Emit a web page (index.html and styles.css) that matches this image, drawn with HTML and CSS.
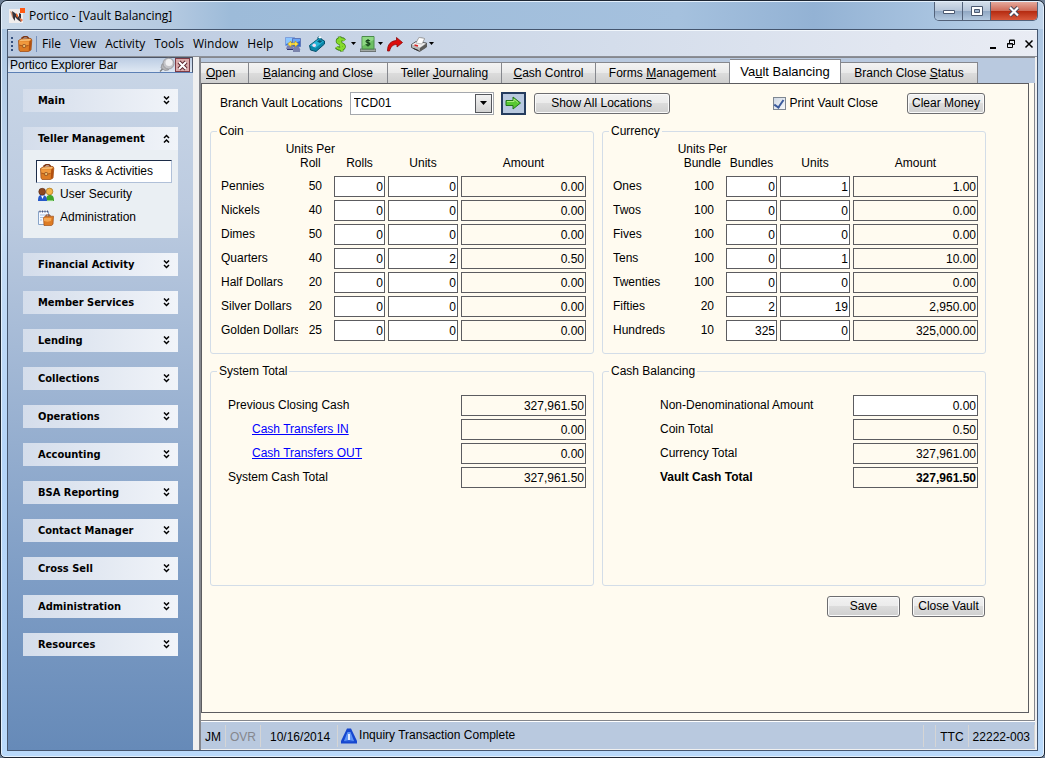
FILE: index.html
```html
<!DOCTYPE html>
<html lang="en">
<head>
    <meta charset="UTF-8">
    <meta name="viewport" content="width=device-width, initial-scale=1.0">
    <title>Portico - [Vault Balancing]</title>
    <link rel="stylesheet" href="styles.css">
</head>
<body>
    <!-- Shared icon shapes -->
    <svg class="icon-defs" aria-hidden="true">
        <symbol id="icon-case" viewBox="0 0 16 16">
            <path d="M5 4V2L7 .8h3L11.500 2v2" fill="none" stroke="#7c3512" stroke-width="1.500"/>
            <path d="M1.500 4.500L4 3l10-.5.8 1.500-.8 10-2.500 1.500H3l-1-1.500z" fill="#dd7c24" stroke="#a1501a" stroke-width=".8"/>
            <path d="M2 5l2.200-1.500 9.800-.5-1.500 1.800z" fill="#f9c27a"/>
            <path d="M2 5.200l10 .3-.5 4-4.500.8-4.500-1.300z" fill="#f0993e"/>
            <path d="M2.300 9l4.700 1.300 4.500-.8" fill="none" stroke="#9a4a14" stroke-width=".8"/>
            <path d="M6 8.500h2.200v3H6z" fill="#ffe08a" stroke="#7c3512" stroke-width=".6"/>
            <path d="M12.300 5.500L14.500 4l-.8 9.800-2 1.500z" fill="#b3500f"/>
        </symbol>
        <symbol id="chevrons-down" viewBox="0 0 7 9">
            <path d="M1 .5l2.500 2.500L6 .5M1 5l2.500 2.500L6 5" fill="none" stroke="#000" stroke-width="1.500"/>
        </symbol>
        <symbol id="chevrons-up" viewBox="0 0 7 9">
            <path d="M1 4l2.500-2.500L6 4M1 8.500L3.500 6 6 8.500" fill="none" stroke="#000" stroke-width="1.500"/>
        </symbol>
    </svg>

    <div class="window">
        <!-- Title bar -->
        <header class="title-bar">
            <svg class="app-icon" viewBox="0 0 16 16" aria-hidden="true">
                <path d="M0 1h14v14H0z" fill="#f1eeee"/>
                <path d="M1 3l4 2v7l-2-3z" fill="#d99a7c"/>
                <path d="M3 3l3 2 4 4V5l2 1v8l-3-2-3-3v4L4 10z" fill="#33333d"/>
                <path d="M7 5l2 2v3L7 8z" fill="#e8662a"/>
                <path d="M11 0h5v5h-5z" fill="#ff5a14"/>
                <path d="M10 9l4 3-2 2z" fill="#e8764a"/>
            </svg>
            <h1 class="title-text">Portico - [Vault Balancing]</h1>
            <div class="window-controls">
                <button class="win-btn" aria-label="Minimize">
                    <svg width="14" height="8" viewBox="0 0 14 8"><path d="M1.500 3.500h11v3h-11z" fill="#fff" stroke="#4b5870"/></svg>
                </button>
                <button class="win-btn" aria-label="Maximize">
                    <svg width="12" height="10" viewBox="0 0 12 10"><path d="M.5.5h11v9H.5z" fill="#fff" stroke="#4b5870"/><path d="M3.500 3.500h5v3h-5z" fill="#9fb4cf" stroke="#4b5870"/></svg>
                </button>
                <button class="win-btn win-close" aria-label="Close">
                    <svg width="12" height="11" viewBox="0 0 12 11"><path d="M2 1.500l8 8M10 1.500l-8 8" stroke="#454a5c" stroke-width="4"/><path d="M2 1.500l8 8M10 1.500l-8 8" stroke="#fff" stroke-width="2.200"/></svg>
                </button>
            </div>
        </header>

        <div class="client">
            <!-- Menu and toolbar -->
            <nav class="menu-bar">
                <span class="grip"></span>
                <svg class="icon" aria-hidden="true"><use href="#icon-case"/></svg>
                <span class="menu-line"></span>
                <div class="menus">
                    <button class="menu-item">File</button>
                    <button class="menu-item">View</button>
                    <button class="menu-item">Activity</button>
                    <button class="menu-item">Tools</button>
                    <button class="menu-item">Window</button>
                    <button class="menu-item">Help</button>
                </div>
                <div class="tools">
                    <button class="tool-btn" aria-label="Connections">
                        <svg class="icon" viewBox="0 0 16 16">
                            <path d="M.5 1.500h9v8h-9z" fill="#3577e8" stroke="#7fa0dc"/>
                            <path d="M1 2h8v3L1 8z" fill="#8cc6ff"/>
                            <path d="M7.500 2.500h8v8h-8z" fill="#2d65d6" stroke="#6079ba"/>
                            <path d="M8 3h7v2L8 8z" fill="#6ba6f8"/>
                            <path d="M2 10h6l1 3H1zM9 11h5l1.500 3H8z" fill="#7a7fb0"/>
                            <path d="M2 13.500h6M8 15h7" stroke="#2f3472"/>
                            <path d="M2.500 8L6 5v2h4V5l3.500 3-3.500 3V9H6v2z" fill="#ffe14a" stroke="#b08a10" stroke-width=".5"/>
                        </svg>
                    </button>
                    <button class="tool-btn" aria-label="Phone">
                        <svg class="icon" viewBox="0 0 16 16">
                            <path d="M.5 9.500L9 3V1l3 .5V3l3.500 2v3L7 15.500 1.500 14z" fill="#0b86a8" stroke="#06506c"/>
                            <path d="M1 9.500L9 3.500l5.800 1.700L6.500 12z" fill="#27b5d6"/>
                            <path d="M8 5.500l2-1.600 3.500 1L11 7z" fill="#0a5372"/>
                            <circle cx="5.200" cy="9.300" r="1.800" fill="#f4d8f0"/>
                            <path d="M9 1.500L11 0l2 1.500-2 1z" fill="#fff"/>
                        </svg>
                    </button>
                    <button class="tool-btn has-arrow" aria-label="Cash">
                        <svg class="icon" viewBox="0 0 16 16">
                            <path d="M11.500 4.500C10 2.500 5 2 4.500 5c-.3 3.300 7 2.200 6.500 5.800-.5 3-6 2.700-7.500.2M6.500.5l2.500 15" fill="none" stroke="#3d7d18" stroke-width="3.600"/>
                            <path d="M11.500 4.500C10 2.500 5 2.500 4.500 5c-.3 3.300 7 2.200 6.500 5.800-.5 2.700-6 2.500-7.500.2M6.500 1L9 15" fill="none" stroke="#86dc2c" stroke-width="2.200"/>
                        </svg>
                        <svg class="drop" viewBox="0 0 5 3"><path d="M0 0h5L2.500 3z"/></svg>
                    </button>
                    <button class="tool-btn has-arrow" aria-label="Cash machine">
                        <svg class="icon" viewBox="0 0 16 16">
                            <path d="M0 13h16v2.500H0z" fill="#a2a9a6" stroke="#4d5552" stroke-width=".7"/>
                            <path d="M2 .5h12V13H2z" fill="#6cbf62" stroke="#4a8a4a"/>
                            <path d="M2.500 1h11v3l-11 6z" fill="#8fd884"/>
                            <path d="M10 5C9 3.800 6 4 6 5.400c0 1.600 4 .9 4 2.600 0 1.500-3.200 1.600-4.200.4M8 3v7.500" fill="none" stroke="#123f19" stroke-width="1.100"/>
                        </svg>
                        <svg class="drop" viewBox="0 0 5 3"><path d="M0 0h5L2.500 3z"/></svg>
                    </button>
                    <button class="tool-btn" aria-label="Forward">
                        <svg class="icon" viewBox="0 0 16 16">
                            <path d="M.5 15C.5 8 4 5 9.500 4.500V1.500L15.500 6.500l-5.500 4.500V8.500C6 8.500 4 10 2.500 15z" fill="#dd0c0c" stroke="#8d0808" stroke-width=".8"/>
                        </svg>
                    </button>
                    <button class="tool-btn has-arrow" aria-label="Print">
                        <svg class="icon" viewBox="0 0 16 16">
                            <path d="M5 7l3-5.500 5.500 1L11 8z" fill="#fff" stroke="#777" stroke-width=".8"/>
                            <path d="M.5 8.500L5 5.500 15.500 7v4l-7 4.500-8-4z" fill="#b9b9b9" stroke="#444" stroke-width=".8"/>
                            <path d="M1 8.500l4.500-2.500 9 1.500L9 11.500z" fill="#efefef"/>
                            <path d="M9 12l6.500-4.500V11l-7 4.500z" fill="#5c5c5a"/>
                            <path d="M5 7l3-5.500 5.500 1L11 8z" fill="#fff" stroke="#999" stroke-width=".6"/>
                            <path d="M3.500 9l3.500 1" stroke="#d22" stroke-width="1.500"/>
                            <path d="M2.500 12.500l5 2" stroke="#222"/>
                        </svg>
                        <svg class="drop" viewBox="0 0 5 3"><path d="M0 0h5L2.500 3z"/></svg>
                    </button>
                </div>
                <div class="child-controls">
                    <button class="child-btn" aria-label="Minimize child"><svg width="10" height="10" viewBox="0 0 10 10"><path d="M2 8h6v2H2z"/></svg></button>
                    <button class="child-btn" aria-label="Restore child"><svg width="10" height="10" viewBox="0 0 10 10"><path d="M3.500 4V1h5v4.500H6.500M3 1.500h6M1.500 4.500h5v4h-5zM1 5h6" fill="none" stroke="#000"/></svg></button>
                    <button class="child-btn" aria-label="Close child"><svg width="10" height="10" viewBox="0 0 10 10"><path d="M1.500 1.500l7 7M8.500 1.500l-7 7" stroke="#000" stroke-width="1.500"/></svg></button>
                </div>
            </nav>

            <div class="main">
                <!-- Explorer bar -->
                <aside class="sidebar">
                    <div class="sidebar-header">
                        <span>Portico Explorer Bar</span>
                        <button class="pin-btn" aria-label="Pin">
                            <svg class="icon" viewBox="0 0 16 16">
                                <path d="M1 14.500l4-4" stroke="#777" stroke-width="1.300"/>
                                <path d="M3 7c3-1 6 1 6.500 6L6 13.500 2 11z" fill="#b5b5b8" stroke="#8a8a8e" stroke-width=".7"/>
                                <circle cx="9.500" cy="6.500" r="5.500" fill="#c4c4c8" stroke="#8a8a8e" stroke-width=".7"/>
                                <circle cx="10" cy="5.500" r="3.500" fill="#f0f0f2"/>
                            </svg>
                        </button>
                        <button class="close-bar" aria-label="Close explorer bar">
                            <svg width="11" height="11" viewBox="0 0 11 11"><path d="M2 2l7 7M9 2L2 9" stroke="#5b2630" stroke-width="4"/><path d="M2 2l7 7M9 2L2 9" stroke="#fff" stroke-width="2"/></svg>
                        </button>
                    </div>
                    <div class="groups">
                        <button class="group-head">Main<svg class="chev"><use href="#chevrons-down"/></svg></button>
                        <section class="group-open">
                            <button class="group-head">Teller Management<svg class="chev"><use href="#chevrons-up"/></svg></button>
                            <div class="group-body">
                                <a class="nav-link active" href="#tasks"><svg class="icon"><use href="#icon-case"/></svg>Tasks &amp; Activities</a>
                                <a class="nav-link" href="#security">
                                    <svg class="icon" viewBox="0 0 16 16">
                                        <path d="M8 14c0-4 1-6 4-6s4 2 4 6z" fill="#3fa52b"/>
                                        <circle cx="11.500" cy="4.500" r="3.400" fill="#f3b548" stroke="#9a6412" stroke-width=".6"/>
                                        <path d="M0 14c0-4.500 1-6 4-6s5 1.500 5 6z" fill="#2458c9"/>
                                        <path d="M3 8.500h3L4.500 12z" fill="#fff"/>
                                        <circle cx="4.200" cy="4.700" r="3.400" fill="#8d4720" stroke="#4c2410" stroke-width=".6"/>
                                        <path d="M9 14h6" stroke="#d8f5d0"/>
                                    </svg>User Security</a>
                                <a class="nav-link" href="#administration">
                                    <svg class="icon" viewBox="0 0 16 16">
                                        <path d="M.5 1.500h10v13H.5z" fill="#f4f8ff" stroke="#88a4c8"/>
                                        <path d="M2 .5v2M4.500.5v2M7 .5v2M9.500.5v2" stroke="#557"/>
                                        <path d="M2 5h6M2 7.500h3M2 10h2" stroke="#a9c1e2"/>
                                        <path d="M8 6.500V5h4v1.500" fill="none" stroke="#7c3512"/>
                                        <path d="M5.500 7.500L7 6.500l8.500-.3-.5 8-1.500 1.300H6z" fill="#dd7c24" stroke="#a1501a" stroke-width=".7"/>
                                        <path d="M6 8h7.500L13 11l-3.500.8L6 11z" fill="#f4a552"/>
                                    </svg>Administration</a>
                            </div>
                        </section>
                        <button class="group-head">Financial Activity<svg class="chev"><use href="#chevrons-down"/></svg></button>
                        <button class="group-head">Member Services<svg class="chev"><use href="#chevrons-down"/></svg></button>
                        <button class="group-head">Lending<svg class="chev"><use href="#chevrons-down"/></svg></button>
                        <button class="group-head">Collections<svg class="chev"><use href="#chevrons-down"/></svg></button>
                        <button class="group-head">Operations<svg class="chev"><use href="#chevrons-down"/></svg></button>
                        <button class="group-head">Accounting<svg class="chev"><use href="#chevrons-down"/></svg></button>
                        <button class="group-head">BSA Reporting<svg class="chev"><use href="#chevrons-down"/></svg></button>
                        <button class="group-head">Contact Manager<svg class="chev"><use href="#chevrons-down"/></svg></button>
                        <button class="group-head">Cross Sell<svg class="chev"><use href="#chevrons-down"/></svg></button>
                        <button class="group-head">Administration<svg class="chev"><use href="#chevrons-down"/></svg></button>
                        <button class="group-head">Resources<svg class="chev"><use href="#chevrons-down"/></svg></button>
                    </div>
                </aside>

                <div class="workspace">
                    <!-- Tabs -->
                    <div class="tabs">
                        <button class="tab tab-open"><span><u>O</u>pen</span></button>
                        <button class="tab tab-balancing"><span><u>B</u>alancing and Close</span></button>
                        <button class="tab tab-journal"><span>Teller <u>J</u>ournaling</span></button>
                        <button class="tab tab-cash"><span><u>C</u>ash Control</span></button>
                        <button class="tab tab-forms"><span>Forms <u>M</u>anagement</span></button>
                        <button class="tab tab-vault selected"><span>Va<u>u</u>lt Balancing</span></button>
                        <button class="tab tab-branch"><span>Branch Close <u>S</u>tatus</span></button>
                    </div>

                    <div class="panel">
                        <main class="page">
                            <div class="top-row">
                                <label for="location">Branch Vault Locations</label>
                                <div class="select-box">
                                    <select id="location"><option>TCD01</option></select>
                                    <span class="select-arrow"><svg class="select-tri" viewBox="0 0 7 4"><path d="M0 0h7L3.500 4z"/></svg></span>
                                </div>
                                <button class="go-btn" aria-label="Go">
                                    <svg width="17" height="16" viewBox="0 0 17 16"><path d="M1 5.500h7V2l7.500 6L8 14v-3.500H1z" fill="#58c832" stroke="#22761a"/><path d="M2 6.500h7V4l4 3.500" fill="none" stroke="#a8ec7c"/></svg>
                                </button>
                                <button class="btn btn-wide">Show All Locations</button>
                                <label class="check"><input type="checkbox" checked>Print Vault Close</label>
                                <button class="btn btn-clear">Clear Money</button>
                            </div>

                            <div class="cards">
                                <fieldset class="card card-count">
                                    <legend>Coin</legend>
                                    <div class="count-body">
                                        <table class="count-table">
                                            <colgroup><col><col class="col-per"><col class="col-packs"><col class="col-units"><col class="col-amount"></colgroup>
                                            <thead>
                                                <tr><th colspan="2" class="per-head"><span>Units Per<br>Roll</span></th><th>Rolls</th><th>Units</th><th>Amount</th></tr>
                                            </thead>
                                            <tbody>
                                                <tr><td class="name">Pennies</td><td class="per">50</td><td><input aria-label="Pennies rolls" value="0"></td><td><input aria-label="Pennies units" value="0"></td><td><input aria-label="Pennies amount" value="0.00" readonly></td></tr>
                                                <tr><td class="name">Nickels</td><td class="per">40</td><td><input aria-label="Nickels rolls" value="0"></td><td><input aria-label="Nickels units" value="0"></td><td><input aria-label="Nickels amount" value="0.00" readonly></td></tr>
                                                <tr><td class="name">Dimes</td><td class="per">50</td><td><input aria-label="Dimes rolls" value="0"></td><td><input aria-label="Dimes units" value="0"></td><td><input aria-label="Dimes amount" value="0.00" readonly></td></tr>
                                                <tr><td class="name">Quarters</td><td class="per">40</td><td><input aria-label="Quarters rolls" value="0"></td><td><input aria-label="Quarters units" value="2"></td><td><input aria-label="Quarters amount" value="0.50" readonly></td></tr>
                                                <tr><td class="name">Half Dollars</td><td class="per">20</td><td><input aria-label="Half Dollars rolls" value="0"></td><td><input aria-label="Half Dollars units" value="0"></td><td><input aria-label="Half Dollars amount" value="0.00" readonly></td></tr>
                                                <tr><td class="name">Silver Dollars</td><td class="per">20</td><td><input aria-label="Silver Dollars rolls" value="0"></td><td><input aria-label="Silver Dollars units" value="0"></td><td><input aria-label="Silver Dollars amount" value="0.00" readonly></td></tr>
                                                <tr><td class="name">Golden Dollars</td><td class="per">25</td><td><input aria-label="Golden Dollars rolls" value="0"></td><td><input aria-label="Golden Dollars units" value="0"></td><td><input aria-label="Golden Dollars amount" value="0.00" readonly></td></tr>
                                            </tbody>
                                        </table>
                                    </div>
                                </fieldset>

                                <fieldset class="card card-count">
                                    <legend>Currency</legend>
                                    <div class="count-body">
                                        <table class="count-table">
                                            <colgroup><col><col class="col-per"><col class="col-packs"><col class="col-units"><col class="col-amount"></colgroup>
                                            <thead>
                                                <tr><th colspan="2" class="per-head"><span>Units Per<br>Bundle</span></th><th>Bundles</th><th>Units</th><th>Amount</th></tr>
                                            </thead>
                                            <tbody>
                                                <tr><td class="name">Ones</td><td class="per">100</td><td><input aria-label="Ones bundles" value="0"></td><td><input aria-label="Ones units" value="1"></td><td><input aria-label="Ones amount" value="1.00" readonly></td></tr>
                                                <tr><td class="name">Twos</td><td class="per">100</td><td><input aria-label="Twos bundles" value="0"></td><td><input aria-label="Twos units" value="0"></td><td><input aria-label="Twos amount" value="0.00" readonly></td></tr>
                                                <tr><td class="name">Fives</td><td class="per">100</td><td><input aria-label="Fives bundles" value="0"></td><td><input aria-label="Fives units" value="0"></td><td><input aria-label="Fives amount" value="0.00" readonly></td></tr>
                                                <tr><td class="name">Tens</td><td class="per">100</td><td><input aria-label="Tens bundles" value="0"></td><td><input aria-label="Tens units" value="1"></td><td><input aria-label="Tens amount" value="10.00" readonly></td></tr>
                                                <tr><td class="name">Twenties</td><td class="per">100</td><td><input aria-label="Twenties bundles" value="0"></td><td><input aria-label="Twenties units" value="0"></td><td><input aria-label="Twenties amount" value="0.00" readonly></td></tr>
                                                <tr><td class="name">Fifties</td><td class="per">20</td><td><input aria-label="Fifties bundles" value="2"></td><td><input aria-label="Fifties units" value="19"></td><td><input aria-label="Fifties amount" value="2,950.00" readonly></td></tr>
                                                <tr><td class="name">Hundreds</td><td class="per">10</td><td><input aria-label="Hundreds bundles" value="325"></td><td><input aria-label="Hundreds units" value="0"></td><td><input aria-label="Hundreds amount" value="325,000.00" readonly></td></tr>
                                            </tbody>
                                        </table>
                                    </div>
                                </fieldset>

                                <fieldset class="card card-total">
                                    <legend>System Total</legend>
                                    <div class="total-body">
                                        <div class="total-row"><label for="prev">Previous Closing Cash</label><input id="prev" value="327,961.50" readonly></div>
                                        <div class="total-row linked"><a href="#in">Cash Transfers IN</a><input aria-label="Cash Transfers IN" value="0.00" readonly></div>
                                        <div class="total-row linked"><a href="#out">Cash Transfers OUT</a><input aria-label="Cash Transfers OUT" value="0.00" readonly></div>
                                        <div class="total-row"><label for="system">System Cash Total</label><input id="system" value="327,961.50" readonly></div>
                                    </div>
                                </fieldset>

                                <fieldset class="card card-total">
                                    <legend>Cash Balancing</legend>
                                    <div class="total-body cash-body">
                                        <div class="total-row"><label for="nonden">Non-Denominational Amount</label><input id="nonden" value="0.00"></div>
                                        <div class="total-row"><label for="coin">Coin Total</label><input id="coin" value="0.50" readonly></div>
                                        <div class="total-row"><label for="currency">Currency Total</label><input id="currency" value="327,961.00" readonly></div>
                                        <div class="total-row strong"><label for="vault">Vault Cash Total</label><input id="vault" value="327,961.50" readonly></div>
                                    </div>
                                </fieldset>
                            </div>

                            <div class="actions">
                                <button class="btn">Save</button>
                                <button class="btn">Close Vault</button>
                            </div>
                        </main>
                    </div>

                    <!-- Status bar -->
                    <footer class="status-bar">
                        <span class="status-cell">JM</span>
                        <span class="status-cell muted">OVR</span>
                        <span class="status-cell status-date">10/16/2014</span>
                        <span class="status-message">
                            <svg class="icon" viewBox="0 0 16 16" aria-hidden="true">
                                <path d="M6 .5h4L16 13v2.500H0V13z" fill="#1546cf"/>
                                <path d="M6.500 4h3L13 13H3z" fill="#5f93f4"/>
                                <path d="M7.200 6h1.600v6H7.200z" fill="#fff"/>
                                <path d="M2 13.500l5-1.500h2l5 1.500z" fill="#2d62dd"/>
                            </svg>Inquiry Transaction Complete</span>
                        <span class="status-cell status-blank"></span>
                        <span class="status-cell">TTC</span>
                        <span class="status-cell">22222-003</span>
                    </footer>
                </div>
            </div>
        </div>
    </div>
</body>
</html>
```
FILE: styles.css
```css
* {
    margin: 0;
    padding: 0;
    box-sizing: border-box;
}

body {
    font-family: "Liberation Sans", Arial, sans-serif;
    font-size: 12px;
    line-height: 15px;
    color: #000;
    background: #6d7f95;
}

button,
input,
select {
    font: inherit;
    color: inherit;
}

button {
    background: none;
    border: none;
}

.icon-defs {
    display: none;
}

.icon {
    width: 16px;
    height: 16px;
    flex: none;
}

/* Window frame */
.window {
    min-height: 100vh;
    display: flex;
    flex-direction: column;
    padding: 0 6px 6px;
    border: 1px solid #1d2633;
    border-radius: 7px 7px 5px 5px;
    background: linear-gradient(#a9c3df, #c5dcf5 30%, #b4d4f8 60%, #b9d9fa);
    box-shadow: inset 0 0 0 1px #e4f0fc;
}

.title-bar {
    display: flex;
    align-items: center;
    height: 28px;
    margin: 0 -5px;
    padding: 0 5px 0 7px;
    border-radius: 6px 6px 0 0;
    border-top: 1px solid #e4f0fc;
    background: linear-gradient(90deg, #cbdaea, #b5cae1 16%, #9dbbd9 22%, #a5c1de 65%, #93b2d4 78%, #a9c4e0 90%, #c0d4ea);
}

.app-icon {
    width: 16px;
    height: 16px;
}

.title-text {
    font-family: "Open Sans", sans-serif;
    font-size: 12px;
    font-weight: normal;
    margin-left: 4px;
}

.window-controls {
    display: flex;
    align-self: flex-start;
    margin-left: auto;
    height: 19px;
    border: 1px solid #53627a;
    border-top: none;
    border-radius: 0 0 5px 5px;
    overflow: hidden;
}

.win-btn {
    display: flex;
    align-items: center;
    justify-content: center;
    width: 28px;
    border-right: 1px solid #53627a;
    background: linear-gradient(#d3deea, #b5c5d9 48%, #8fa6c2 50%, #b4c9e0);
}

.win-close {
    width: 46px;
    border-right: none;
    background: linear-gradient(#e5a99c, #cf6b58 48%, #b4290f 50%, #d8593c);
}

.client {
    flex: 1;
    display: flex;
    flex-direction: column;
    border: 1px solid #45566f;
    background: #f0f0f0;
}

/* Menu bar */
.menu-bar {
    display: flex;
    align-items: center;
    height: 27px;
    padding: 0 3px;
    border-top: 1px solid #f2f7fc;
    border-bottom: 1px solid #8b8f97;
    background: linear-gradient(90deg, #b8c8df, #cdd8e8 45%, #e9ecf4);
}

.grip {
    width: 2px;
    height: 14px;
    margin-right: 4px;
    background: repeating-linear-gradient(#35507e 0 2px, transparent 2px 4px);
}

.menu-line {
    width: 1px;
    height: 16px;
    margin-left: 3px;
    background: #7590bb;
}

.menus {
    display: flex;
    gap: 9px;
    margin-left: 5px;
}

.menu-item {
    font-family: "Open Sans", sans-serif;
    font-size: 12px;
}

.tools {
    display: flex;
    gap: 8px;
    margin-left: 12px;
}

.tool-btn {
    display: flex;
    align-items: center;
}

.has-arrow {
    gap: 2px;
    margin-right: -4px;
}

.drop {
    width: 5px;
    height: 3px;
}

.child-controls {
    display: flex;
    gap: 8px;
    margin-left: auto;
}

.child-btn {
    display: flex;
}

/* Explorer bar */
.main {
    flex: 1;
    display: flex;
}

.sidebar {
    display: flex;
    flex-direction: column;
    flex: none;
    width: 185px;
    margin-right: 6px;
}

.sidebar-header {
    display: flex;
    align-items: center;
    height: 16px;
    padding: 0 2px;
    border: 1px solid #4d5668;
    border-bottom-color: #5c80b5;
    border-left: none;
    background: linear-gradient(#bccde4, #dfe8f3);
}

.pin-btn {
    display: flex;
    margin-left: auto;
}

.close-bar {
    display: flex;
    align-items: center;
    justify-content: center;
    width: 15px;
    height: 14px;
    border: 1px solid #7c3a44;
    background: #dba9a9;
}

.groups {
    flex: 1;
    display: flex;
    flex-direction: column;
    gap: 15px;
    padding: 16px 15px;
    background: linear-gradient(#c8d5e6, #bccbe0 20%, #7e9dc5 75%, #668ab8);
}

.group-head {
    display: flex;
    align-items: center;
    justify-content: space-between;
    width: 100%;
    height: 23px;
    padding: 0 8px 0 15px;
    font-family: "DejaVu Sans Condensed", "DejaVu Sans", sans-serif;
    font-size: 11px;
    font-weight: bold;
    background: linear-gradient(90deg, #d4ddeb, #f1f4f9);
}

.chev {
    width: 7px;
    height: 9px;
}

.group-body {
    padding: 10px 6px 10px 13px;
    height: 88px;
    background: #eaeff3;
}

.nav-link {
    display: flex;
    align-items: center;
    gap: 6px;
    height: 23px;
    padding: 0 2px;
    color: #000;
    text-decoration: none;
}

.nav-link.active {
    border: 1px solid #b0c0d8;
    border-top-color: #1c2c48;
    border-left-color: #1c2c48;
    background: #fff;
}

/* Tabs */
.workspace {
    flex: 1;
    min-width: 0;
    display: flex;
    flex-direction: column;
    margin-right: 2px;
    border-left: 2px solid #85878d;
    border-top: 1px solid #85878d;
    background: #b9c9df;
}

.tabs {
    display: flex;
    align-items: flex-end;
    height: 25px;
}

.tab {
    height: 21px;
    border: 1px solid #85878d;
    border-left: none;
    border-bottom: none;
    background: linear-gradient(#f3f3f3, #e9e9e9 48%, #dcdcdc 50%, #cfcfcf);
}

.tab-open {
    width: 48px;
    text-align: left;
    padding-left: 5px;
}

.tab-balancing {
    width: 139px;
}

.tab-journal {
    width: 114px;
}

.tab-cash {
    width: 94px;
}

.tab-forms {
    width: 134px;
}

.tab-vault {
    width: 111px;
}

.tab-branch {
    width: 137px;
}

.tab.selected {
    height: 24px;
    font-size: 13px;
    background: #fff;
}

/* Page */
.panel {
    flex: 1;
    display: flex;
    padding: 0 5px 7px 0;
    border-right: 1px solid #85878d;
    border-bottom: 1px solid #85878d;
    background: #fffbf0;
}

.page {
    flex: 1;
    padding: 7px 42px 8px 8px;
    border: 1px solid #5c5c60;
    background: #fffbf0;
}

.top-row {
    display: flex;
    align-items: center;
    height: 24px;
    padding: 0 1px 0 10px;
}

.select-box {
    position: relative;
    width: 144px;
    margin-left: 7px;
}

.select-box select {
    width: 100%;
    height: 23px;
    padding-left: 3px;
    border: 1px solid #a5a8ad;
    appearance: none;
    background: #fff;
}

.select-arrow {
    position: absolute;
    top: 2px;
    right: 2px;
    display: flex;
    align-items: center;
    justify-content: center;
    width: 17px;
    height: 19px;
    border: 1px solid #55575c;
    background: linear-gradient(#f2f2f2, #d2d2d2);
    pointer-events: none;
}

.select-tri {
    width: 7px;
    height: 4px;
}

.go-btn {
    display: flex;
    align-items: center;
    justify-content: center;
    width: 25px;
    height: 23px;
    margin: 0 8px 0 7px;
    border: 2px solid #253c5e;
    background: #b9c9df;
}

.btn {
    width: 73px;
    height: 21px;
    border: 1px solid #6d6d70;
    border-radius: 3px;
    background: linear-gradient(#f2f2f2, #ebebeb 48%, #dcdcdc 50%, #cfcfcf);
    box-shadow: inset 0 0 0 1px #fafafa;
    white-space: nowrap;
}

.btn-wide {
    width: 136px;
}

.btn-clear {
    width: 78px;
}

.check {
    display: flex;
    align-items: center;
    gap: 4px;
    margin-left: auto;
    margin-right: 29px;
}

.check input {
    width: 13px;
    height: 13px;
    appearance: none;
    border: 1px solid #7e8792;
    background: linear-gradient(135deg, #cfd8e4, #f7f9fb);
}

.check input:checked::before {
    content: "";
    display: block;
    width: 4px;
    height: 8px;
    margin: 0 auto;
    border: solid #3a5a9c;
    border-width: 0 2px 2px 0;
    transform: rotate(35deg);
}

.cards {
    display: grid;
    grid-template-columns: 1fr 1fr;
    gap: 10px 8px;
    margin-top: 9px;
}

.card {
    min-width: 0;
    border: 1px solid #d3dde8;
    border-radius: 3px;
}

.card legend {
    margin-left: 6px;
    padding: 0 2px;
}

.card-count {
    height: 230px;
}

.count-body {
    padding: 0 4px 0 7px;
}

.count-table {
    width: 100%;
    table-layout: fixed;
    border-spacing: 3px;
}

.col-per {
    width: 30px;
}

.col-packs {
    width: 51px;
}

.col-units {
    width: 70px;
}

.col-amount {
    width: 125px;
}

.count-table th {
    height: 30px;
    padding-bottom: 3px;
    font-weight: normal;
    line-height: 14px;
    vertical-align: bottom;
    white-space: nowrap;
}

.count-table .per-head {
    text-align: right;
}

.per-head span {
    display: inline-block;
    margin-right: -4px;
    text-align: center;
}

.count-table .name {
    overflow: hidden;
    white-space: nowrap;
}

.count-table .per {
    padding-right: 9px;
    text-align: right;
}

.count-table input,
.total-row input {
    display: block;
    width: 100%;
    height: 21px;
    padding: 0 1px;
    border: 1px solid #5c5c60;
    background: #fff;
    text-align: right;
}

.count-table input:read-only,
.total-row input:read-only {
    background: #fffbf0;
}

.card-total {
    height: 222px;
}

.total-body {
    padding: 16px 7px 0 17px;
}

.cash-body {
    padding-left: 57px;
}

.total-row {
    display: flex;
    align-items: center;
    justify-content: space-between;
    margin-bottom: 3px;
}

.total-row input {
    width: 125px;
}

.linked {
    padding-left: 24px;
}

.linked a {
    color: #00f;
}

.strong {
    font-weight: bold;
}

.actions {
    display: flex;
    justify-content: flex-end;
    gap: 12px;
    margin-top: 10px;
    padding-right: 1px;
}

/* Status bar */
.status-bar {
    display: flex;
    align-items: center;
    height: 29px;
    border-top: 1px solid #fff;
    border-bottom: 1px solid #f0f0f0;
}

.status-cell {
    height: 22px;
    line-height: 24px;
    padding: 0 4px;
    border-right: 1px solid #d5d5d5;
}

.muted {
    color: #85878d;
}

.status-date {
    padding: 0 7px 0 9px;
}

.status-message {
    flex: 1;
    display: flex;
    align-items: center;
    gap: 2px;
    padding-left: 3px;
}

.status-blank {
    width: 13px;
    border-left: 1px solid #d5d5d5;
}
```
